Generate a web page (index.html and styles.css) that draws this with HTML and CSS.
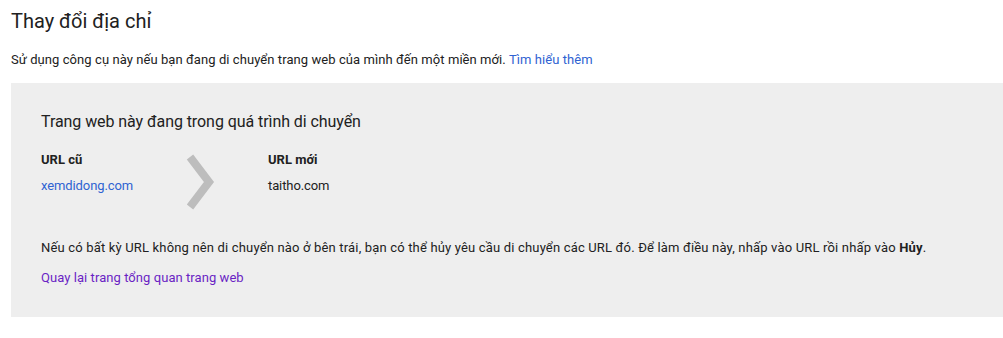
FILE: index.html
```html
<!DOCTYPE html>
<html lang="vi">
  <head>
    <meta charset="UTF-8" />
    <meta name="viewport" content="width=device-width, initial-scale=1.0" />
    <title>Thay đổi địa chỉ</title>
    <link rel="stylesheet" href="styles.css">
  </head>
  <body>
    <div class="page">
      <h1 class="title">Thay đổi địa chỉ</h1>
      <p class="intro">
        Sử dụng công cụ này nếu bạn đang di chuyển trang web của mình đến một miền mới.
        <a href="#" class="link">Tìm hiểu thêm</a>
      </p>

      <div class="panel">
        <h2 class="panel-title">Trang web này đang trong quá trình di chuyển</h2>

        <div class="move-row">
          <div class="url-col">
            <div class="url-label">URL cũ</div>
            <a href="#" class="link url-value">xemdidong.com</a>
          </div>
          <svg class="arrow" width="30" height="56" viewBox="0 0 30 56">
            <polyline points="4,3 23,28 4,53" fill="none" stroke="#bdbdbd" stroke-width="8" />
          </svg>
          <div class="url-col new">
            <div class="url-label">URL mới</div>
            <div class="url-value">taitho.com</div>
          </div>
        </div>

        <p class="note">
          Nếu có bất kỳ URL không nên di chuyển nào ở bên trái, bạn có thể hủy yêu cầu di chuyển các URL đó. Để làm điều này, nhấp vào URL rồi nhấp vào <b>Hủy</b>.
        </p>
        <a href="#" class="back">Quay lại trang tổng quan trang web</a>
      </div>
    </div>
  </body>
</html>
```

FILE: styles.css
```css
html,
body {
  margin: 0;
  background-color: white;
  font-family: Roboto, "Liberation Sans", Arial, sans-serif;
  font-size: 13px;
  color: #212121;
}

.page {
  padding-left: 11px;
}

.title {
  font-size: 20px;
  font-weight: 400;
  line-height: 28px;
  margin: 0;
  padding-top: 7px;
}

.intro {
  line-height: 20px;
  letter-spacing: 0.07px;
  margin: 15px 0 13px 0;
}

.link {
  color: #2f63d2;
  text-decoration: none;
}

.panel {
  background-color: #eeeeee;
  padding: 27px 0 29px 30px;
}

.panel-title {
  font-size: 16px;
  font-weight: 400;
  line-height: 24px;
  letter-spacing: -0.07px;
  margin: 0 0 16px 0;
}

.move-row {
  display: flex;
  align-items: flex-start;
}

.url-col {
  width: 145px;
  line-height: 20px;
}

.url-col.new {
  margin-left: 52px;
}

.url-label {
  font-weight: 700;
}

.url-value {
  display: block;
  margin-top: 6px;
  letter-spacing: -0.1px;
}

.arrow {
  display: block;
  margin-top: 4px;
}

.note {
  line-height: 20px;
  letter-spacing: 0.17px;
  margin: 28px 0 10px 0;
}

.back {
  display: block;
  line-height: 20px;
  letter-spacing: 0.06px;
  color: #6a1fc4;
  text-decoration: none;
}
```
